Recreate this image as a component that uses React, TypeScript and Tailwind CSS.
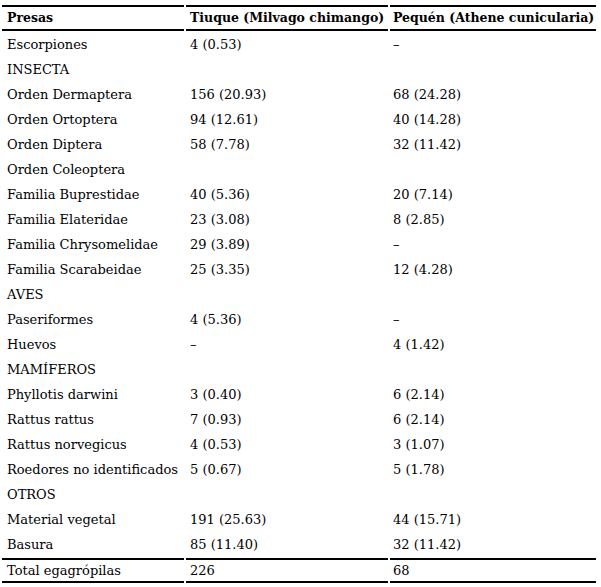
const rows: [string, string, string][] = [
  ['Escorpiones', '4 (0.53)', '–'],
  ['INSECTA', '', ''],
  ['Orden Dermaptera', '156 (20.93)', '68 (24.28)'],
  ['Orden Ortoptera', '94 (12.61)', '40 (14.28)'],
  ['Orden Diptera', '58 (7.78)', '32 (11.42)'],
  ['Orden Coleoptera', '', ''],
  ['Familia Buprestidae', '40 (5.36)', '20 (7.14)'],
  ['Familia Elateridae', '23 (3.08)', '8 (2.85)'],
  ['Familia Chrysomelidae', '29 (3.89)', '–'],
  ['Familia Scarabeidae', '25 (3.35)', '12 (4.28)'],
  ['AVES', '', ''],
  ['Paseriformes', '4 (5.36)', '–'],
  ['Huevos', '–', '4 (1.42)'],
  ['MAMÍFEROS', '', ''],
  ['Phyllotis darwini', '3 (0.40)', '6 (2.14)'],
  ['Rattus rattus', '7 (0.93)', '6 (2.14)'],
  ['Rattus norvegicus', '4 (0.53)', '3 (1.07)'],
  ['Roedores no identificados', '5 (0.67)', '5 (1.78)'],
  ['OTROS', '', ''],
  ['Material vegetal', '191 (25.63)', '44 (15.71)'],
  ['Basura', '85 (11.40)', '32 (11.42)'],
];

const edge = 'border-y-2 border-black';

export default function App() {
  return (
    <div className="bg-white pt-[3px] text-[13px] text-black" style={{ fontFamily: '"DejaVu Serif", serif' }}>
      <table className="table-fixed border-separate border-spacing-[2px] w-[598px]">
        <colgroup>
          <col className="w-[182px]" />
          <col className="w-[202px]" />
          <col className="w-[206px]" />
        </colgroup>
        <thead>
          <tr className="h-[26px] font-bold text-[12.5px] whitespace-nowrap">
            <th className={`${edge} pl-[5px] text-left`}>Presas</th>
            <th className={`${edge} pl-[4px] text-left`}>Tiuque (Milvago chimango)</th>
            <th className={`${edge} pl-[3px] text-left`}>Pequén (Athene cunicularia)</th>
          </tr>
        </thead>
        <tbody>
          {rows.map(([a, b, c]) => (
            <tr key={a} className="h-[23px]">
              <td className="pl-[5px] whitespace-nowrap">{a}</td>
              <td className="pl-[4px]">{b}</td>
              <td className="pl-[3px]">{c}</td>
            </tr>
          ))}
          <tr className="h-[25px]">
            <td className={`${edge} pl-[5px]`}>Total egagrópilas</td>
            <td className={`${edge} pl-[4px]`}>226</td>
            <td className={`${edge} pl-[3px]`}>68</td>
          </tr>
        </tbody>
      </table>
    </div>
  );
}
